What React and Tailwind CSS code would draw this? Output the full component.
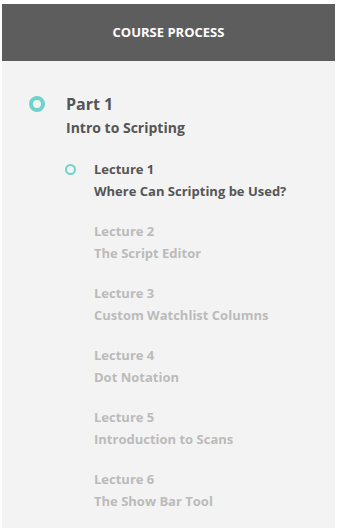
const lectures = [
  { n: 1, title: "Where Can Scripting be Used?", active: true },
  { n: 2, title: "The Script Editor" },
  { n: 3, title: "Custom Watchlist Columns" },
  { n: 4, title: "Dot Notation" },
  { n: 5, title: "Introduction to Scans" },
  { n: 6, title: "The Show Bar Tool" },
];

export default function App() {
  return (
    <div className="min-h-[528px] bg-white pt-[4px] px-[2px] font-['Open_Sans',sans-serif]">
      <div className="w-[333px] min-h-[524px] bg-[#f3f3f3]">
        {/* HEADER */}
        <div className="h-[57px] bg-[#5d5d5d] flex items-center justify-center">
          <h1 className="text-[13px] font-bold text-white">COURSE PROCESS</h1>
        </div>

        {/* PART */}
        <div className="pt-[31px] pl-[27px]">
          <div className="flex">
            <div className="w-[37px] h-[24px] flex items-center">
              <span className="w-[16px] h-[16px] rounded-full border-[4px] border-[#6fd3c9]" />
            </div>
            <div>
              <p className="text-[16px] leading-[24px] font-bold text-[#555]">Part 1</p>
              <p className="text-[14px] leading-[24px] font-bold text-[#555]">Intro to Scripting</p>
            </div>
          </div>

          {/* LECTURES */}
          <ul className="pl-[36px] pt-[18px]">
            {lectures.map((l) => (
              <li key={l.n} className="flex mb-[18px]">
                <div className="w-[29px] h-[22px] flex items-center">
                  {l.active && (
                    <span className="w-[11px] h-[11px] rounded-full border-[2px] border-[#6fd3c9]" />
                  )}
                </div>
                <div className={l.active ? "text-[#555]" : "text-[#bbb]"}>
                  <p className="text-[13px] leading-[22px] font-bold">Lecture {l.n}</p>
                  <p className="text-[13px] leading-[22px] font-bold">{l.title}</p>
                </div>
              </li>
            ))}
          </ul>
        </div>
      </div>
    </div>
  );
}
